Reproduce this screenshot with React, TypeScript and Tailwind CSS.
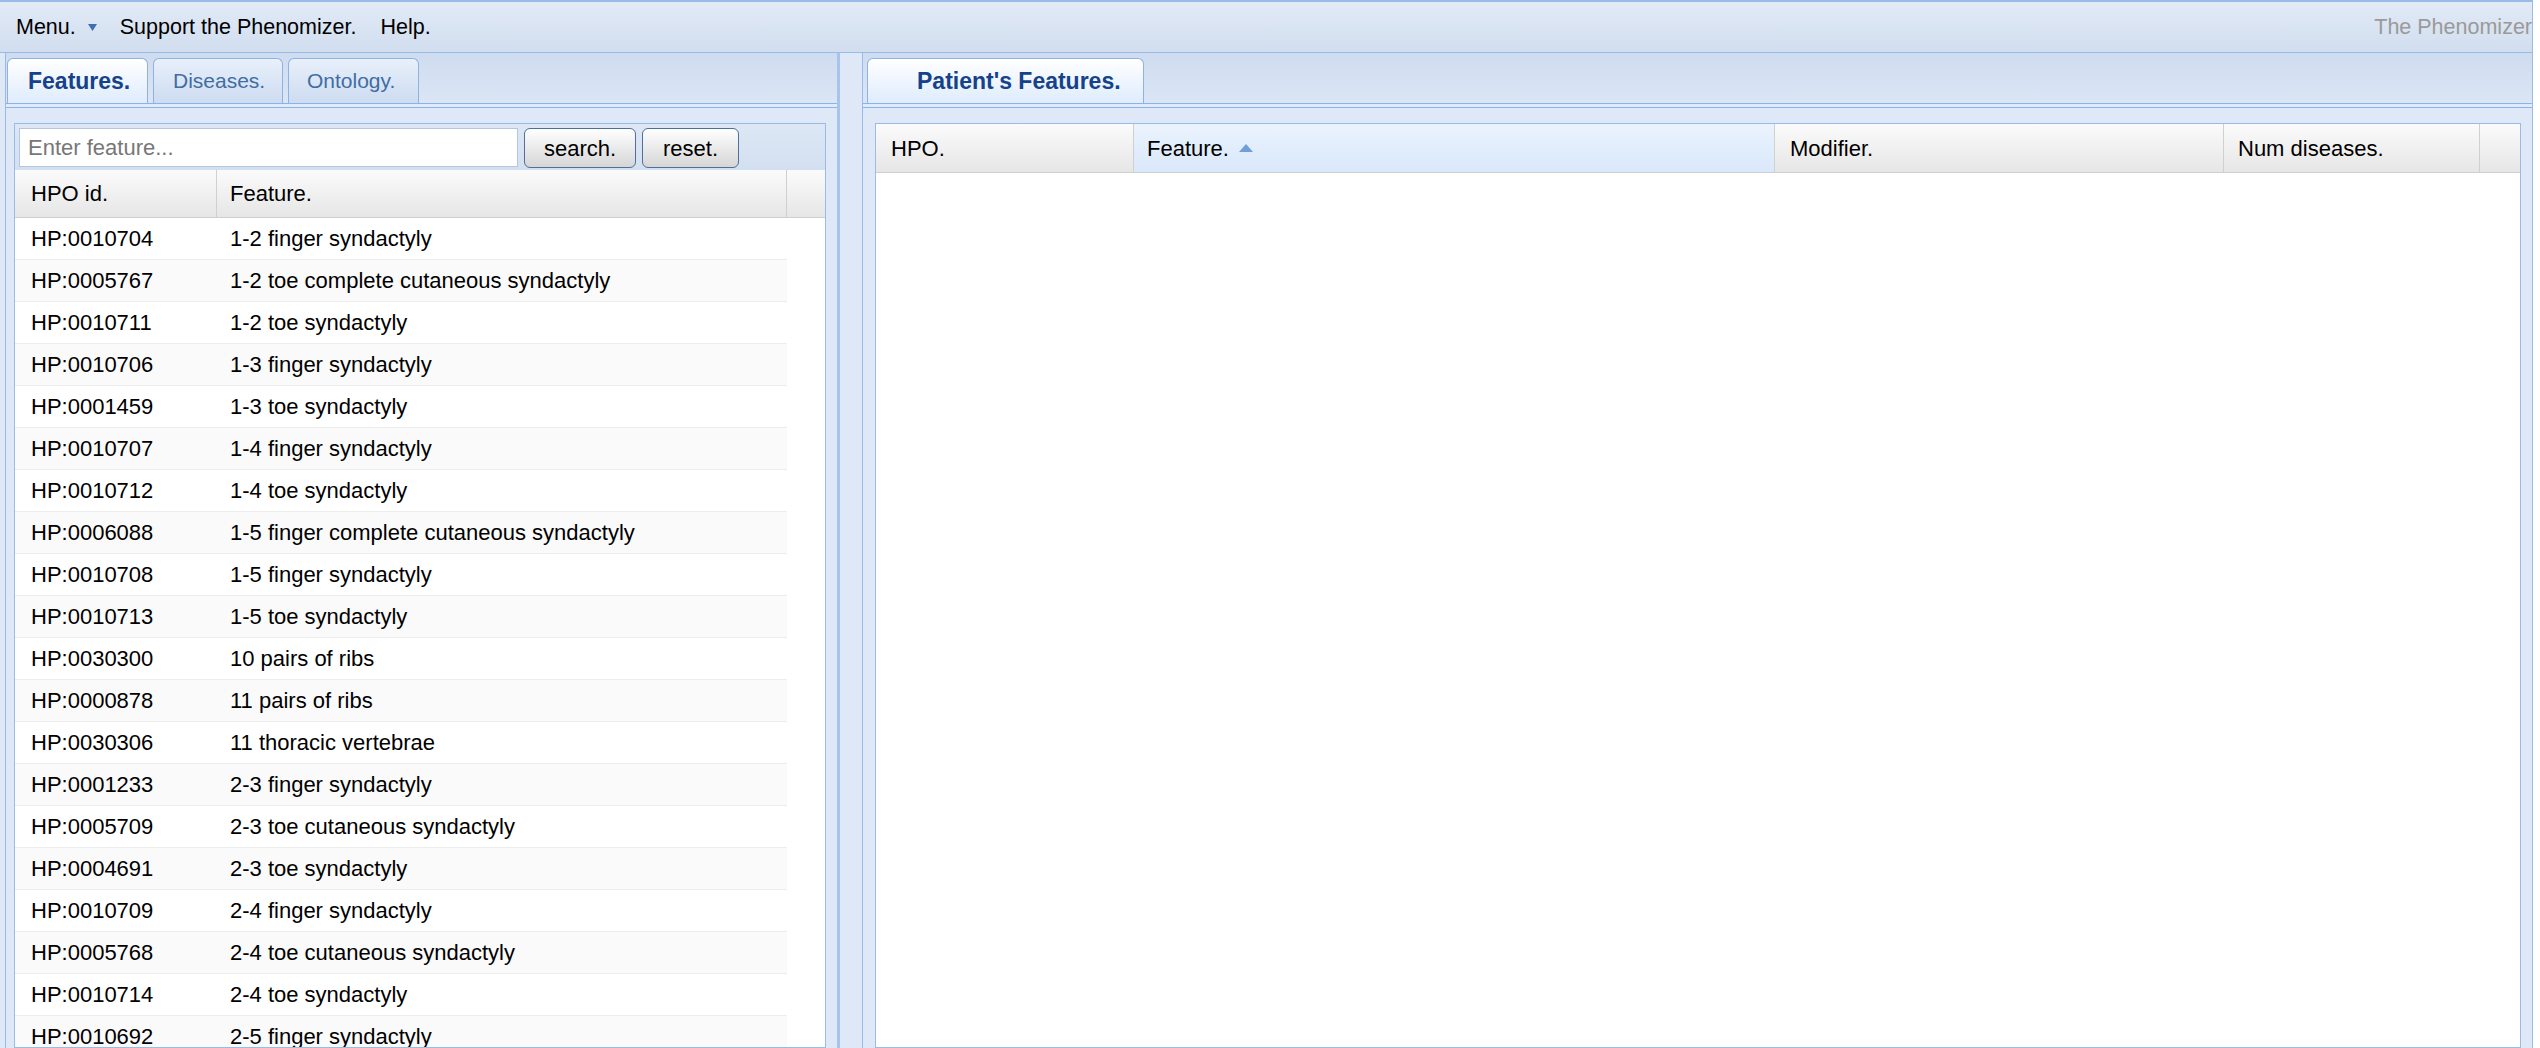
import React from 'react';

const FONT = { fontFamily: '"Liberation Sans", Arial, sans-serif' };

const FEATURES: [string, string][] = [
  ['HP:0010704', '1-2 finger syndactyly'],
  ['HP:0005767', '1-2 toe complete cutaneous syndactyly'],
  ['HP:0010711', '1-2 toe syndactyly'],
  ['HP:0010706', '1-3 finger syndactyly'],
  ['HP:0001459', '1-3 toe syndactyly'],
  ['HP:0010707', '1-4 finger syndactyly'],
  ['HP:0010712', '1-4 toe syndactyly'],
  ['HP:0006088', '1-5 finger complete cutaneous syndactyly'],
  ['HP:0010708', '1-5 finger syndactyly'],
  ['HP:0010713', '1-5 toe syndactyly'],
  ['HP:0030300', '10 pairs of ribs'],
  ['HP:0000878', '11 pairs of ribs'],
  ['HP:0030306', '11 thoracic vertebrae'],
  ['HP:0001233', '2-3 finger syndactyly'],
  ['HP:0005709', '2-3 toe cutaneous syndactyly'],
  ['HP:0004691', '2-3 toe syndactyly'],
  ['HP:0010709', '2-4 finger syndactyly'],
  ['HP:0005768', '2-4 toe cutaneous syndactyly'],
  ['HP:0010714', '2-4 toe syndactyly'],
  ['HP:0010692', '2-5 finger syndactyly'],
];

function Tab({ label, active, className = '' }: { label: string; active?: boolean; className?: string }) {
  return (
    <div
      className={
        'h-[45px] flex items-center rounded-t-[6px] border border-b-0 border-[#8db2e3] ' +
        (active
          ? 'bg-gradient-to-b from-white to-[#deecfd] text-[#15428b] font-bold text-[23px] '
          : 'bg-gradient-to-b from-[#e8f0fa] to-[#cddcf1] text-[#416da3] text-[21px] ') +
        className
      }
    >
      {label}
    </div>
  );
}

function TabStrip({ children, className = '' }: { children: React.ReactNode; className?: string }) {
  return (
    <>
      <div className={'h-[50px] flex items-end gap-[5px] bg-gradient-to-b from-[#cfdcef] to-[#dae6f5] ' + className}>
        {children}
      </div>
      <div className="h-[5px] bg-[#deecfd] border-t border-b border-[#8db2e3]" />
    </>
  );
}

function HeaderCell({ label, width, sorted, pl = 'pl-[15px]' }: { label: string; width: string; sorted?: boolean; pl?: string }) {
  return (
    <div
      className={
        width +
        ' h-full flex items-center border-r border-[#d0d0d0] shrink-0 ' +
        pl +
        (sorted ? ' bg-gradient-to-b from-[#ebf3fd] to-[#d9e8fb]' : '')
      }
    >
      <span>{label}</span>
      {sorted && (
        <svg width="14" height="8" viewBox="0 0 14 8" className="ml-[10px]">
          <path d="M0 8 L7 0 L14 8 Z" fill="#6f9fd8" />
        </svg>
      )}
    </div>
  );
}

export default function App() {
  return (
    <div className="h-[1048px] w-[2540px] overflow-hidden bg-white text-black flex flex-col" style={FONT}>
      <div className="w-[2533px] h-full flex flex-col border-r border-[#99bbe8]">
        {/* Menubar */}
        <div className="h-[53px] shrink-0 border-t-2 border-b border-[#99bbe8] bg-gradient-to-b from-[#e2eaf6] to-[#d1deef] flex items-center text-[21.5px] pl-[16px]">
          <span>Menu.</span>
          <svg width="9" height="7" viewBox="0 0 9 7" className="ml-[12px]">
            <path d="M0 0 L9 0 L4.5 7 Z" fill="#3d6fb5" />
          </svg>
          <span className="ml-[23px]">Support the Phenomizer.</span>
          <span className="ml-[24px]">Help.</span>
          <span className="ml-auto text-[#9a9a9a]">The Phenomizer</span>
        </div>

        <div className="flex-1 min-h-0 flex bg-[#dfe8f6]">
          {/* Left panel */}
          <div className="w-[835px] ml-[5px] shrink-0 flex flex-col border-l border-r-[3px] border-[#99bbe8] border-r-[#a9c4ea]">
            <TabStrip className="pl-[1px]">
              <Tab label="Features." active className="w-[141px] pl-[20px]" />
              <Tab label="Diseases." className="w-[130px] pl-[19px]" />
              <Tab label="Ontology." className="w-[131px] pl-[18px]" />
            </TabStrip>
            <div className="flex-1 min-h-0 pl-[8px] pr-[11px] pt-[15px]">
              <div className="h-full border border-[#99bbe8] bg-white flex flex-col">
                <div className="h-[46px] shrink-0 flex items-start gap-[6px] pt-[4px] pl-[4px] bg-gradient-to-b from-[#dde7f5] to-[#d3e0f1]">
                  <div className="w-[499px] h-[39px] bg-white border border-[#b5c7e0] flex items-center pl-[8px] text-[22px] text-[#777]">
                    Enter feature...
                  </div>
                  <button className="w-[112px] h-[40px] rounded-[6px] border border-[#4f6f9c] bg-gradient-to-b from-white to-[#d6d6d6] text-[22px]">
                    search.
                  </button>
                  <button className="w-[97px] h-[40px] rounded-[6px] border border-[#4f6f9c] bg-gradient-to-b from-white to-[#d6d6d6] text-[22px]">
                    reset.
                  </button>
                </div>
                <div className="h-[48px] shrink-0 flex text-[22px] bg-gradient-to-b from-[#fbfbfb] to-[#e6e6e6] border-b border-[#cfcfcf]">
                  <HeaderCell label="HPO id." width="w-[202px]" pl="pl-[16px]" />
                  <HeaderCell label="Feature." width="w-[570px]" pl="pl-[13px]" />
                </div>
                <div className="flex-1 min-h-0 overflow-hidden">
                  {FEATURES.map(([id, name], i) => (
                    <div
                      key={id}
                      className={
                        'w-[772px] h-[42px] flex items-center text-[22px] border-b border-[#ededed] ' +
                        (i % 2 === 1 ? 'bg-[#fafafa]' : 'bg-white')
                      }
                    >
                      <div className="w-[202px] pl-[16px] shrink-0">{id}</div>
                      <div className="pl-[13px]">{name}</div>
                    </div>
                  ))}
                </div>
              </div>
            </div>
          </div>

          {/* Splitter */}
          <div className="w-[22px] shrink-0 bg-[#dfe8f6]" />

          {/* Right panel */}
          <div className="flex-1 min-w-0 flex flex-col border-l border-[#99bbe8]">
            <TabStrip className="pl-[4px]">
              <Tab label="Patient's Features." active className="w-[277px] pl-[49px]" />
            </TabStrip>
            <div className="flex-1 min-h-0 pl-[12px] pr-[11px] pt-[15px]">
              <div className="h-full border border-[#99bbe8] bg-white flex flex-col">
                <div className="h-[49px] shrink-0 flex text-[22px] bg-gradient-to-b from-[#fbfbfb] to-[#e6e6e6] border-b border-[#cfcfcf]">
                  <HeaderCell label="HPO." width="w-[258px]" />
                  <HeaderCell label="Feature." width="w-[641px]" sorted pl="pl-[13px]" />
                  <HeaderCell label="Modifier." width="w-[449px]" />
                  <HeaderCell label="Num diseases." width="w-[256px]" pl="pl-[14px]" />
                </div>
                <div className="flex-1" />
              </div>
            </div>
          </div>
        </div>
      </div>
    </div>
  );
}
